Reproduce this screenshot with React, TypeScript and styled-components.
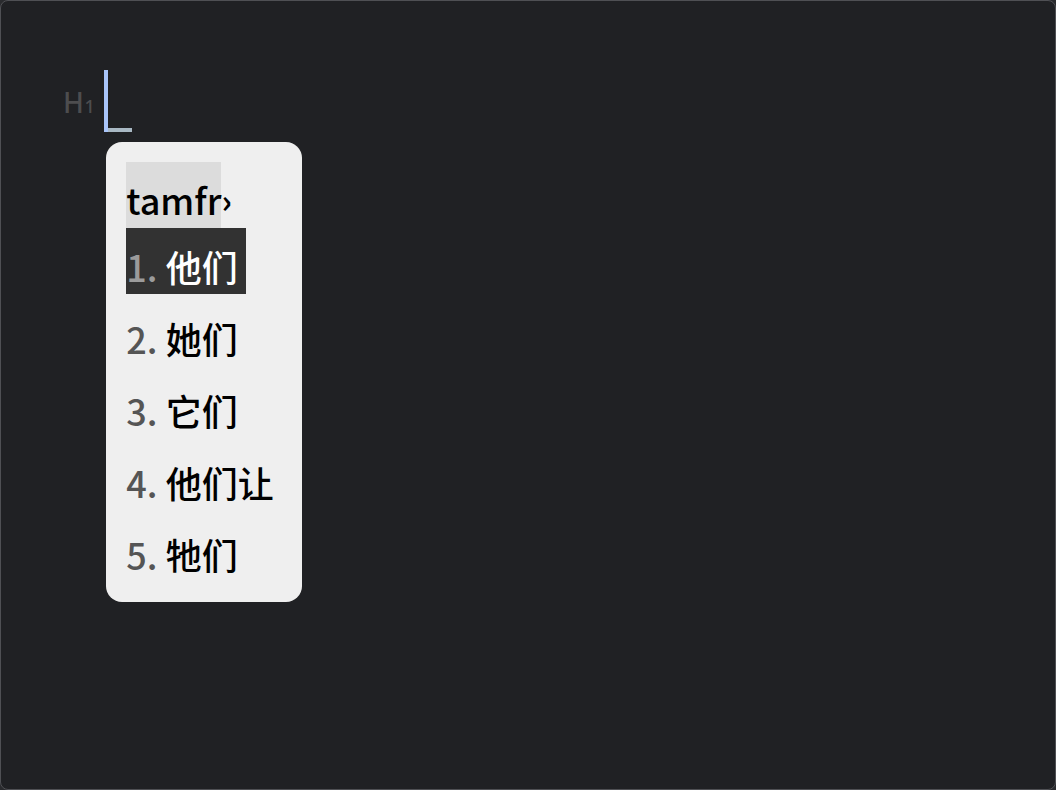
import React from "react";
import styled, { createGlobalStyle } from "styled-components";

const GlobalStyle = createGlobalStyle`
  html, body {
    margin: 0;
    padding: 0;
    background: #2a2b2e;
  }
  body {
    font-family: "Noto Sans CJK SC", "Noto Sans", sans-serif;
  }
`;

const candidates: string[] = ["他们", "她们", "它们", "他们让", "牠们"];

const App: React.FC = () => {
  const active = 0;

  return (
    <>
      <GlobalStyle />
      <Window>
        <Line>
          <HeadingTag>
            H<small>1</small>
          </HeadingTag>
          <CaretArea>
            <Caret />
            <CaretFoot />
            <Popup>
              <Preedit>
                <PreeditText>tamfr</PreeditText>
                <PreeditCaret>›</PreeditCaret>
              </Preedit>
              <CandidateList>
                {candidates.map((word, i) => (
                  <Candidate key={word} $active={i === active}>
                    <Label $active={i === active}>{i + 1}.</Label> {word}
                  </Candidate>
                ))}
              </CandidateList>
            </Popup>
          </CaretArea>
        </Line>
      </Window>
    </>
  );
};

export default App;

const Window = styled.div`
  box-sizing: border-box;
  width: 1056px;
  height: 790px;
  background: #202124;
  border: 1px solid #4f5054;
  border-radius: 8px;
  padding: 69px 0 0 62px;
`;

const Line = styled.div`
  display: flex;
  align-items: flex-start;
  gap: 9px;
`;

const HeadingTag = styled.div`
  margin-top: 16px;
  color: #4d4d4f;
  font-family: "Noto Sans", "Open Sans", sans-serif;
  font-weight: 500;
  font-size: 28px;
  line-height: 32px;
  letter-spacing: 0.5px;

  small {
    font-size: 18px;
  }
`;

const CaretArea = styled.div`
  position: relative;
  width: 28px;
  height: 62px;
`;

const Caret = styled.div`
  width: 4px;
  height: 62px;
  background: #a9c5fa;
`;

const CaretFoot = styled.div`
  position: absolute;
  left: 4px;
  bottom: 0;
  width: 24px;
  height: 4px;
  background: #a9b9c4;
`;

const Popup = styled.div`
  position: absolute;
  top: 72px;
  left: 2px;
  box-sizing: border-box;
  width: 196px;
  padding: 20px;
  background: #efefef;
  border-radius: 16px;
  color: #000;
  font-size: 36px;
  font-weight: 500;
  line-height: 52px;
  white-space: nowrap;
`;

const Preedit = styled.div`
  display: flex;
  align-items: flex-start;
`;

const PreeditText = styled.span`
  box-sizing: border-box;
  height: 66px;
  padding-top: 11px;
  background: #dcdcdc;
`;

const PreeditCaret = styled.span`
  padding-top: 11px;
  font-size: 32px;
  font-weight: 700;
`;

const CandidateList = styled.div`
  display: flex;
  flex-direction: column;
  align-items: flex-start;
  gap: 6px;
`;

const Candidate = styled.div<{ $active: boolean }>`
  box-sizing: border-box;
  height: 66px;
  padding: 12px 8px 0 0;
  background: ${(p) => (p.$active ? "#323232" : "transparent")};
  color: ${(p) => (p.$active ? "#fff" : "#000")};
`;

const Label = styled.span<{ $active: boolean }>`
  color: ${(p) => (p.$active ? "#9b9b9b" : "#555")};
`;
